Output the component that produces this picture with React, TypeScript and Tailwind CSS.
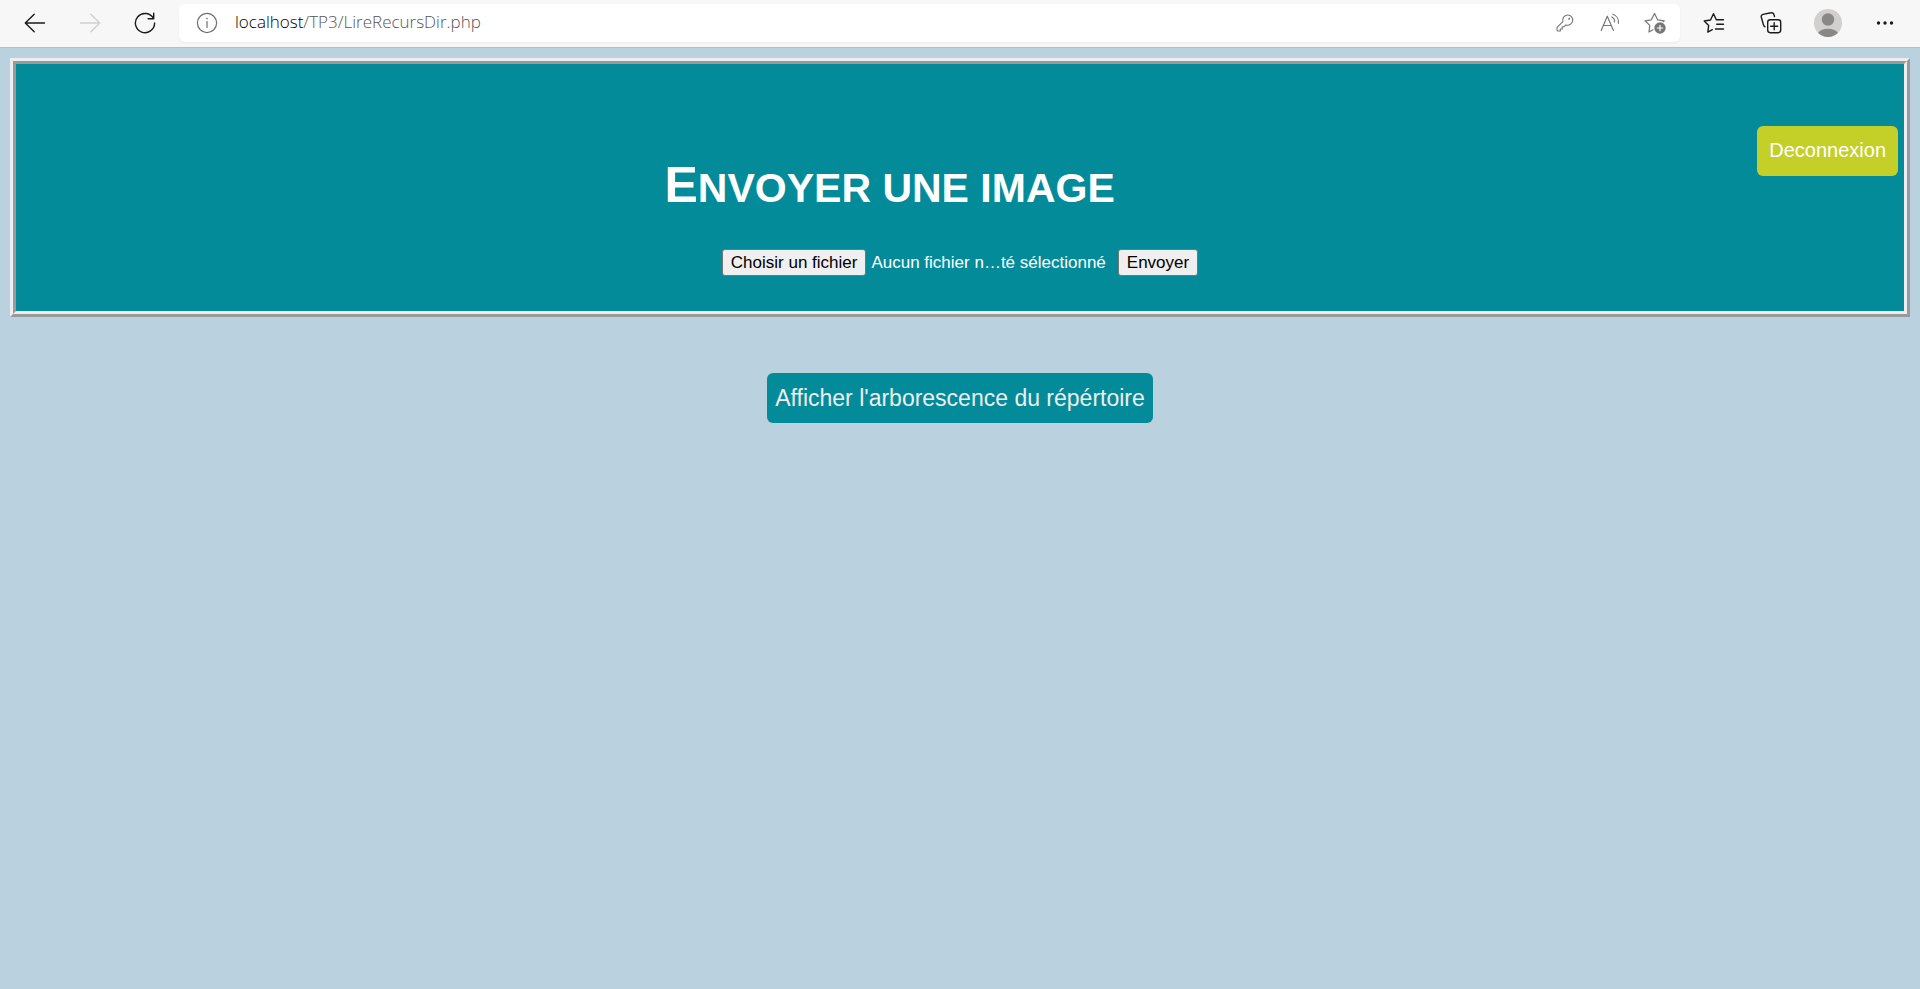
import { useRef, useState } from "react";
import type { ReactNode } from "react";

function ToolButton({ label, disabled, children }: { label: string; disabled?: boolean; children: ReactNode }) {
  return (
    <button
      type="button"
      aria-label={label}
      disabled={disabled}
      className="flex size-7 shrink-0 items-center justify-center text-[#1b1b1b] disabled:text-[#d0d0d0]"
    >
      {children}
    </button>
  );
}

const stroke = {
  fill: "none",
  stroke: "currentColor",
  strokeWidth: 1.4,
  strokeLinecap: "round" as const,
  strokeLinejoin: "round" as const,
};

function ArrowLeft() {
  return (
    <svg width="22" height="22" viewBox="0 0 22 22" {...stroke}>
      <path d="M20.500 11H1.500M10.200 2.300L1.300 11l8.900 8.700" />
    </svg>
  );
}

function ArrowRight() {
  return (
    <svg width="22" height="22" viewBox="0 0 22 22" {...stroke}>
      <path d="M1.500 11h19M11.800 2.300l8.900 8.700-8.900 8.700" />
    </svg>
  );
}

function Reload() {
  return (
    <svg width="22" height="22" viewBox="0 0 22 22" {...stroke}>
      <path d="M19.500 6.600A9.600 9.600 0 1 0 20.600 11M19.700 1.200v5.600h-5.600" />
    </svg>
  );
}

function Info() {
  return (
    <svg width="22" height="22" viewBox="0 0 22 22" {...stroke} strokeWidth={1.2}>
      <circle cx="11" cy="11" r="9.600" />
      <path d="M11 9.500v6" />
      <circle cx="11" cy="6.600" r="0.800" fill="currentColor" stroke="none" />
    </svg>
  );
}

function Key() {
  return (
    <svg width="18" height="18" viewBox="0 0 18 18" {...stroke} strokeWidth={1.1}>
      <path d="M11.800 1a5.100 5.100 0 0 0-4.900 6.600L1.300 13.200a1 1 0 0 0-.3.700v2.100a1 1 0 0 0 1 1h2.300v-2h2v-2.200h1.700l1.900-1.900A5.100 5.100 0 1 0 11.800 1z" />
      <circle cx="13.200" cy="4.800" r="1" fill="currentColor" stroke="none" />
    </svg>
  );
}

function ReadAloud() {
  return (
    <svg width="20" height="20" viewBox="0 0 20 20" {...stroke} strokeWidth={1.2}>
      <path d="M1.200 17.500L7.300 3.200l6.100 14.300M3.400 12.500h7.800M11.800 4a5 5 0 0 1 2.700 5M12.800 1.200a8.500 8.500 0 0 1 5.700 9" />
    </svg>
  );
}

function StarAdd() {
  return (
    <svg width="22" height="22" viewBox="0 0 22 22" {...stroke} strokeWidth={1.2}>
      <path d="M9 17.800l-4 2.200.8-6.600L1 8.800l6.300-1L10.500 1.500l3.100 6.300 6.600 1-1 1.100" />
      <circle cx="16" cy="16" r="5.700" fill="currentColor" stroke="none" />
      <path d="M16 13.300v5.400M13.300 16h5.400" stroke="white" />
    </svg>
  );
}

function Favorites() {
  return (
    <svg width="22" height="22" viewBox="0 0 22 22" {...stroke}>
      <path d="M9.300 17.700l-4.500 2.400.9-6.700L1.200 9l6.300-1L10.500 1.700l2.800 6h7.200M13.700 12.300h6.800M12.500 17h8" />
    </svg>
  );
}

function Collections() {
  return (
    <svg width="22" height="22" viewBox="0 0 22 22" {...stroke}>
      <rect x="7.700" y="7.700" width="13" height="13" rx="2.600" />
      <path d="M14.200 10.700v7M10.700 14.200h7M5 14.800a2.800 2.800 0 0 1-1.500-1.900L1.300 5.200A2.300 2.300 0 0 1 3 2.400l8-1.600a2.500 2.500 0 0 1 3 1.900l.5 1.800" />
    </svg>
  );
}

function Avatar() {
  return (
    <svg width="28" height="28" viewBox="0 0 28 28">
      <circle cx="14" cy="14" r="14" fill="#d2d0ce" />
      <circle cx="14" cy="10.500" r="6.200" fill="#8a8886" />
      <path d="M4 23.800a11.500 8.200 0 0 1 20 0A14 14 0 0 1 4 23.800z" fill="#8a8886" />
    </svg>
  );
}

function Dots() {
  return (
    <svg width="18" height="4" viewBox="0 0 18 4" fill="currentColor">
      <circle cx="2.500" cy="2" r="1.700" />
      <circle cx="9" cy="2" r="1.700" />
      <circle cx="15.500" cy="2" r="1.700" />
    </svg>
  );
}

function BrowserBar() {
  return (
    <header className="flex h-12 items-center border-b border-[#bcbcbc] bg-[#f7f7f7] pr-[21px] pb-px pl-[21px]">
      <nav aria-label="Navigation" className="flex gap-[27px] pb-px">
        <ToolButton label="Retour"><ArrowLeft /></ToolButton>
        <ToolButton label="Suivant" disabled><ArrowRight /></ToolButton>
        <ToolButton label="Actualiser"><Reload /></ToolButton>
      </nav>
      <div className="ml-5 flex h-[38px] flex-1 items-center rounded-md bg-white pr-[11px] pb-px pl-3.5 shadow-xs">
        <button type="button" aria-label="Informations sur le site" className="flex size-7 items-center justify-center text-[#6e6e6e]">
          <Info />
        </button>
        <div
          role="textbox"
          aria-label="Adresse"
          contentEditable
          suppressContentEditableWarning
          spellCheck={false}
          className="ml-3.5 flex-1 pb-px font-['Open_Sans','Noto_Sans',sans-serif] text-[17px] leading-6 font-light text-[#555555] outline-none"
        >
          <span className="text-black">localhost</span>/TP3/LireRecursDir.php
        </div>
        <div className="flex gap-[17px] [&_button]:text-[#767676]">
          <ToolButton label="Mots de passe"><Key /></ToolButton>
          <ToolButton label="Lecture à voix haute"><ReadAloud /></ToolButton>
          <ToolButton label="Ajouter aux favoris"><StarAdd /></ToolButton>
        </div>
      </div>
      <div className="ml-5 flex gap-[29px] pb-px">
        <ToolButton label="Favoris"><Favorites /></ToolButton>
        <ToolButton label="Collections"><Collections /></ToolButton>
        <ToolButton label="Profil"><Avatar /></ToolButton>
        <ToolButton label="Paramètres"><Dots /></ToolButton>
      </div>
    </header>
  );
}

const plainButton = "h-[27px] rounded-[3px] border border-[#767676] bg-[#efefef] px-2 text-black";

function UploadForm() {
  const picker = useRef<HTMLInputElement>(null);
  const [fileName, setFileName] = useState("Aucun fichier n…té sélectionné");

  return (
    <form onSubmit={(e) => e.preventDefault()} className="flex items-center justify-center text-[17px] leading-6">
      <input
        ref={picker}
        type="file"
        aria-label="Image"
        className="hidden"
        onChange={(e) => setFileName(e.target.files?.[0]?.name ?? fileName)}
      />
      <button type="button" onClick={() => picker.current?.click()} className={plainButton}>
        Choisir un fichier
      </button>
      <span className="ml-[5px]">{fileName}</span>
      <button type="submit" className={`ml-3 ${plainButton}`}>
        Envoyer
      </button>
    </form>
  );
}

export default function App() {
  return (
    <div className="flex min-h-screen flex-col bg-[#bad1e0] font-['Liberation_Sans',Arial,sans-serif]">
      <BrowserBar />
      <main className="flex flex-col p-2.5">
        <section className="flex flex-col border-6 border-[#eeeeee] [border-style:ridge] bg-[#048b9a] px-1.5 pt-[62px] pb-[35px] text-white">
          <div className="flex items-start">
            <h1 className="flex-1 pt-[34px] text-center text-[41px] leading-14 font-bold uppercase first-letter:text-[50px] first-letter:leading-none">
              Envoyer une image
            </h1>
            <button type="button" className="h-[50px] rounded-md bg-[#c4cf28] px-3 pb-0.5 text-xl">
              Deconnexion
            </button>
          </div>
          <div className="mt-[33px]">
            <UploadForm />
          </div>
        </section>
        <button type="button" className="mt-14 h-[50px] self-center rounded-md bg-[#048b9a] px-2 text-[23px] text-[#eeeeee]">
          Afficher l'arborescence du répértoire
        </button>
      </main>
    </div>
  );
}
